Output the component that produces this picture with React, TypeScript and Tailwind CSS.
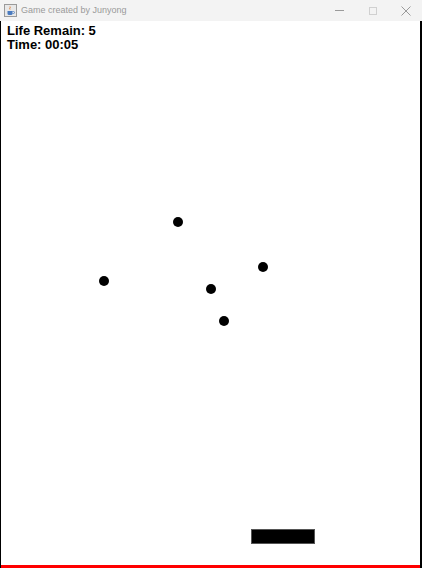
import React from 'react'

const balls = [
  { x: 172, y: 196 },
  { x: 98, y: 255 },
  { x: 205, y: 263 },
  { x: 257, y: 241 },
  { x: 218, y: 295 },
]

function JavaIcon() {
  return (
    <svg width="13" height="13" viewBox="0 0 13 13" className="shrink-0">
      <rect x="0.5" y="0.5" width="12" height="12" fill="#e8e8e8" stroke="#9a9a9a" />
      <path d="M6 2.5c1 1-1 1.5 0 3" stroke="#e07a2e" strokeWidth="1" fill="none" />
      <path d="M3.5 7h5v2.5a1.5 1.5 0 0 1-1.5 1.5h-2a1.5 1.5 0 0 1-1.5-1.5z" fill="#4a7bbf" />
      <path d="M8.5 7.5h1a1 1 0 0 1 0 2h-1" stroke="#4a7bbf" strokeWidth="0.8" fill="none" />
    </svg>
  )
}

export default function App() {
  return (
    <div className="w-[422px] h-[569px] flex flex-col bg-white overflow-hidden font-['Liberation_Sans',Arial,sans-serif]">
      {/* Title bar */}
      <div className="h-[21px] bg-[#f3f3f3] flex items-center pl-[4px] shrink-0">
        <JavaIcon />
        <span className="ml-[4px] text-[9px] text-[#9a9a9a] leading-none">Game created by Junyong</span>
        <div className="ml-auto flex items-center h-full">
          <div className="w-[33px] flex justify-center">
            <div className="w-[9px] h-px bg-[#9a9a9a]" />
          </div>
          <div className="w-[33px] flex justify-center">
            <div className="w-[8px] h-[8px] border border-[#d0d0d0]" />
          </div>
          <div className="w-[33px] flex justify-center">
            <svg width="10" height="10" viewBox="0 0 10 10">
              <path d="M0.5 0.5L9.5 9.5M9.5 0.5L0.5 9.5" stroke="#9a9a9a" strokeWidth="1" />
            </svg>
          </div>
        </div>
      </div>

      {/* Game panel */}
      <div className="flex-1 flex flex-col border-l border-r-2 border-black">
        <div className="flex-1 relative pt-[3px] pl-[6px]">
          <p className="text-[13px] leading-[14px] font-bold text-black">Life Remain: 5</p>
          <p className="text-[13px] leading-[14px] font-bold text-black">Time: 00:05</p>

          {balls.map((b, i) => (
            <div
              key={i}
              className="absolute w-[10px] h-[10px] rounded-full bg-black"
              style={{ left: b.x, top: b.y }}
            />
          ))}

          {/* paddle */}
          <div className="absolute left-[250px] top-[508px] w-[64px] h-[15px] bg-black border border-[#555]" />
        </div>
        <div className="h-[3px] bg-[#ff0000]" />
      </div>
      <div className="h-px bg-white" />
    </div>
  )
}
